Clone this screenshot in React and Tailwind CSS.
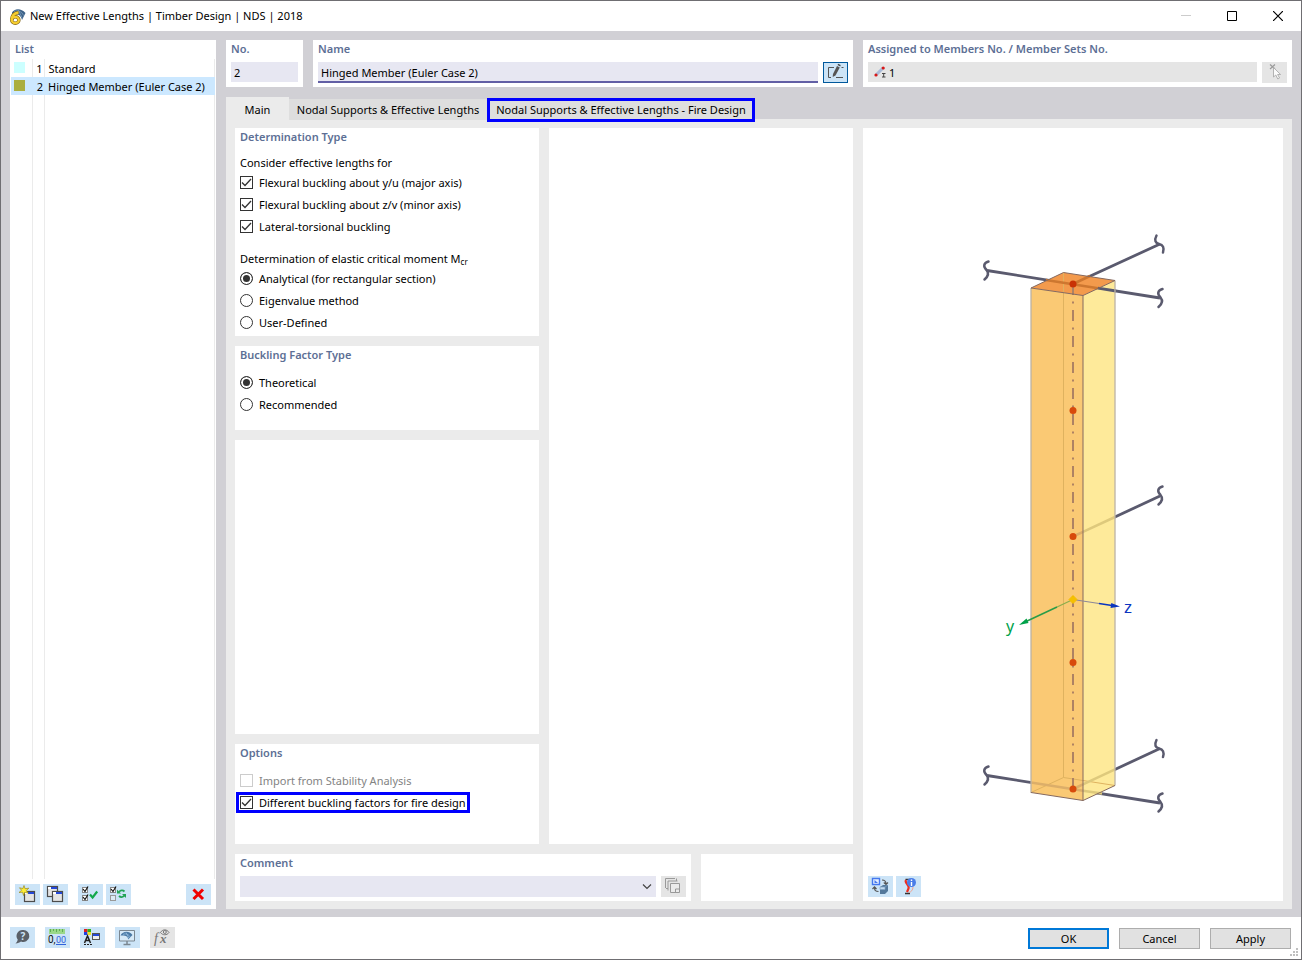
import { useState } from 'react';

const members = [
  { no: 1, name: 'Standard', color: 'bg-[#ccffff]' },
  { no: 2, name: 'Hinged Member (Euler Case 2)', color: 'bg-[#aaae40]' },
];

const tabs = [
  { label: 'Main', style: 'h-[23px] w-[63px] pt-0.5' },
  { label: 'Nodal Supports & Effective Lengths', style: 'mt-0.5 h-[21px] w-[198px]' },
  { label: 'Nodal Supports & Effective Lengths - Fire Design', style: 'mt-px h-6 w-[268px] border-3 border-[#0000ff]' },
];

/* ---------- icons, all drawn on the 25x21 button face ---------- */

const Icon = ({ children }) => (
  <svg width="25" height="21" viewBox="0 0 25 21" fill="none" aria-hidden="true">{children}</svg>
);

const MiniWindow = ({ x, y }) => (
  <g>
    <rect x={x + 0.5} y={y + 0.5} width="10" height="10" fill="#e4e4e4" stroke="#4c4c4c" strokeWidth="1.2" />
    <rect x={x + 1} y={y + 1} width="9" height="2" fill="#fff" />
    <rect x={x + 4} y={y + 1} width="6" height="2" fill="#2448d8" />
  </g>
);

const NewIcon = () => (
  <Icon>
    <MiniWindow x={9} y={7} />
    <path d="M9 1.5l1 3.200 3.800-.5-2.600 2.400 2 2.600-3.400-1L8.500 11.500l-.8-3.300-3.700.3 2.600-2.200L4.500 3.800l3.400.7z" fill="#ffee33" stroke="#9a8a20" strokeWidth=".7" />
  </Icon>
);

const CopyIcon = () => (
  <Icon>
    <MiniWindow x={4} y={2} />
    <MiniWindow x={9} y={7} />
  </Icon>
);

const TickBox = ({ y, ticked }) => (
  <g>
    <rect x="4.5" y={y + 0.5} width="5" height="5" fill={ticked ? '#fff' : '#dcebf5'} stroke={ticked ? '#888' : '#999'} />
    {ticked && <path d={`M5 ${y + 2}l2 2.500 3-5`} stroke="#111" strokeWidth="1.2" />}
  </g>
);

const CheckAllIcon = () => (
  <Icon>
    <TickBox y={3} ticked />
    <TickBox y={11} ticked />
    <path d="M12 10.5l2.600 3 4.600-6" stroke="#12a84a" strokeWidth="2.2" />
  </Icon>
);

const InvertIcon = () => (
  <Icon>
    <TickBox y={3} ticked />
    <TickBox y={11} />
    <path d="M13 8c1.500-2 4-2 5.500-.5M18.500 11.500c-1.500 2-4 2-5.500.5" stroke="#22a455" strokeWidth="1.8" />
    <path d="M11 5.500v4h4zM20 14v-4h-4z" fill="#22a455" />
  </Icon>
);

const DeleteIcon = () => (
  <Icon><path d="M7.500 5.500l9.500 9.500M17 5.500L7.500 15" stroke="#f00000" strokeWidth="3" /></Icon>
);

const HelpIcon = () => (
  <Icon>
    <path d="M13 3a6 6 0 1 1-2 11.500c-1.500 1-3 1.700-5.500 2 1.500-1.500 2-2.500 2.200-4A6 6 0 0 1 13 3z" fill="#5a6068" />
    <text x="10.5" y="13" fontSize="10" fontWeight="bold" fontFamily="Noto Sans, sans-serif" fill="#cce4f7">?</text>
  </Icon>
);

const UnitsIcon = () => (
  <Icon>
    <path d="M4 2h16v5H4z" fill="#9ad88a" />
    <path d="M5.500 2v3M8.500 2v2M11.500 2v3M14.500 2v2M17.500 2v3" stroke="#5fae55" />
    <text x="3" y="16" fontSize="10" fontFamily="Roboto, sans-serif" fill="#111">0,</text>
    <text x="11" y="16" fontSize="9" fontFamily="Roboto, sans-serif" fill="#2f62dc">00</text>
    <path d="M11 17.500h10" stroke="#2f62dc" />
  </Icon>
);

const DisplayIcon = () => (
  <Icon>
    <path d="M4 2h3.500v3H4z" fill="#e02020" />
    <path d="M7.500 2H11v3H7.500z" fill="#30b020" />
    <path d="M4 5h3.500v3H4z" fill="#2040e0" />
    <path d="M7.500 5H11v3H7.500z" fill="#f0e020" />
    <path d="M4.500 16l3-7 3 7M5.500 13.500h4" stroke="#222" strokeWidth="1.5" />
    <path d="M4 17.500h9" stroke="#222" strokeDasharray="2 1" />
    <rect x="12.5" y="6.5" width="7" height="6" fill="#eee" stroke="#555" />
    <path d="M13 8h6" stroke="#2448d8" strokeWidth="2" />
  </Icon>
);

const MonitorIcon = () => (
  <Icon>
    <path d="M4.500 3.500h15v10.500h-15z" stroke="#7b8791" fill="#d7eaf8" />
    <path d="M12 14v3M8.500 17.500h7" stroke="#7b8791" strokeWidth="1.5" />
    <path d="M5.500 8.500C8 4 14 3.500 17.500 8l-4.500 4.500c.5-3-2.500-4.500-7.500-4z" fill="#4a79a5" />
    <path d="M8 7.500c3-1.500 6 0 7 2.500M11 5.500l3 6" stroke="#9cc3e4" strokeWidth=".7" />
  </Icon>
);

const FormulaIcon = () => (
  <Icon>
    <text x="4" y="16" fontSize="14" fontStyle="italic" fontFamily="Liberation Serif, serif" fill="#777">f</text>
    <text x="10" y="16" fontSize="13" fontStyle="italic" fontWeight="bold" fontFamily="Liberation Serif, serif" fill="#777">x</text>
    <path d="M10.500 5.500c2-3.500 6.500-3.500 8.500 0-2 3-6.500 3-8.500 0z" stroke="#777" />
    <circle cx="14.800" cy="5" r="1.500" stroke="#777" />
  </Icon>
);

const EditIcon = () => (
  <svg width="23" height="19" viewBox="0 0 23 19" fill="none" aria-hidden="true">
    <path d="M10 4.500H4.500v10H7M12 14.500h7M17.500 4.500h2" stroke="#555" />
    <path d="M9 11L13 3l2.800 1.400-4.300 8.100L8.700 14z" fill="#555" />
    <path d="M13.500 2l.7-1.300 2.500 1.300-.5 1.400z" fill="#444" />
  </svg>
);

const PickIcon = () => (
  <Icon>
    <path d="M8 2.500l5 4.500M13 2.500L8 7" stroke="#999" strokeWidth="1.2" />
    <path d="M11.500 5.500v9.500l2.300-2 2 4 1.800-1-2-3.500h3z" fill="#fafafa" stroke="#aaa" strokeWidth=".9" />
  </Icon>
);

const StackIcon = () => (
  <Icon>
    <path d="M14 2.500H4.500V12M16.500 5H7v9.500M15.500 2.500V5M5 12.500h2" stroke="#999" />
    <path d="M9.500 7.500h9v9h-9zM14.500 16.500v-3.500h4" stroke="#999" fill="#ebebeb" />
  </Icon>
);

const SwitchViewIcon = () => (
  <Icon>
    <path d="M4.500 2.500h7v6h-7z" fill="#e6efff" stroke="#4478ee" strokeWidth="1.4" />
    <path d="M6.500 4v3h3.500z" fill="#4478ee" />
    <path d="M14 4c3 0 4 1 4 4M15.800 6.500l2.200 2 2-2M10.500 15.500c-3 0-4-1-4-4M4.500 13l2-2.200 2 2.200" stroke="#555" strokeWidth="1.2" />
    <path d="M12 11l3-2h5v6l-3 3h-5z" fill="#53789b" />
    <path d="M12 11h5v2.500h-5zM17 11l3-2" fill="#c3dbf0" stroke="#7fa3c4" strokeWidth=".7" />
  </Icon>
);

const InfoViewIcon = () => (
  <Icon>
    <path d="M9.500 3.500h5M9 17.500h5" stroke="#333" strokeWidth="1.5" />
    <path d="M10 4c-2 3 4 5 2.500 8.500L11 16" stroke="#ee2d20" strokeWidth="2.2" />
    <path d="M17 11c0 3-2 5-4 5.500" stroke="#f3a08c" />
    <circle cx="15.500" cy="6.500" r="4.500" fill="#4a7de8" />
    <path d="M15.500 6v4M15.500 3.500v1.400" stroke="#fff" strokeWidth="1.4" />
  </Icon>
);

const AppIcon = () => (
  <svg width="17" height="17" viewBox="0 0 17 17" fill="none" aria-hidden="true">
    <path d="M3 4.500C5 .5 12-.5 16.500 5l-3.500 7C12 7 8 5 3 6z" fill="#3d6288" />
    <path d="M5 3.500c4-1.500 8 0 9.500 4M9 1.500l4 8" stroke="#86a8c6" strokeWidth=".7" />
    <path d="M9.500 4.500C5.500 5 2.800 7.500 2.800 12" stroke="#806418" strokeWidth="3.6" />
    <ellipse cx="6.300" cy="12" rx="3.600" ry="3.200" stroke="#806418" strokeWidth="3.4" />
    <path d="M9.500 4.500C5.500 5 2.800 7.500 2.800 12" stroke="#f5cc2e" strokeWidth="2.4" />
    <ellipse cx="6.300" cy="12" rx="3.600" ry="3.200" stroke="#f5cc2e" strokeWidth="2.2" />
  </svg>
);

const MemberIcon = () => (
  <svg width="12" height="12" viewBox="0 0 12 12" fill="none" aria-hidden="true">
    <path d="M2 9l7-7" stroke="#a9bbd8" strokeWidth="3" />
    <circle cx="2" cy="9" r="1.600" fill="#d81818" />
    <circle cx="9.200" cy="2" r="1.600" fill="#d81818" />
    <path d="M8 7.500h3.500M8 11h3.500M9.700 7.500V11" stroke="#444" />
  </svg>
);

/* ---------- small building blocks ---------- */

const Panel = ({ title, className = '', children }) => (
  <section className={`flex flex-col bg-white px-[5px] ${className}`}>
    {title && <h2 className="h-[18px] shrink-0 font-semibold leading-[18px] text-[#5d6f95] whitespace-nowrap">{title}</h2>}
    {children}
  </section>
);

const IconButton = ({ label, disabled, className = '', children }) => (
  <button
    type="button"
    aria-label={label}
    disabled={disabled}
    className={`flex h-[21px] w-[25px] shrink-0 items-center justify-center ${disabled ? 'bg-[#e5e5e5]' : 'bg-[#cce4f7]'} ${className}`}
  >
    {children}
  </button>
);

const Checkbox = ({ label, defaultChecked, disabled, className = 'h-[22px]' }) => (
  <label className={`flex w-fit items-center gap-1.5 ${disabled ? 'text-[#838383]' : ''} ${className}`}>
    <span className="relative mb-px size-[13px] shrink-0">
      <input
        type="checkbox"
        defaultChecked={defaultChecked}
        disabled={disabled}
        className="peer block size-[13px] appearance-none border border-[#333] bg-white disabled:border-[#ccc]"
      />
      <svg viewBox="0 0 13 13" fill="none" className="pointer-events-none absolute inset-0 hidden peer-checked:block">
        <path d="M2 6.500l3 3 6-6.500" stroke="#333" strokeWidth="1.3" />
      </svg>
    </span>
    <span className="whitespace-nowrap">{label}</span>
  </label>
);

const Radio = ({ label, name, defaultChecked }) => (
  <label className="flex h-[22px] w-fit items-center gap-1.5">
    <input
      type="radio"
      name={name}
      defaultChecked={defaultChecked}
      className="mb-px size-[13px] shrink-0 appearance-none rounded-full border border-[#333] bg-white checked:bg-[#333] checked:shadow-[inset_0_0_0_2px_white]"
    />
    <span className="whitespace-nowrap">{label}</span>
  </label>
);

/* ---------- timber column preview ---------- */

// break symbol at the free end of a connected member
const Break = ({ x, y }) => (
  <path
    d={`M${x + 2.5} ${y - 9}c-5 1.500-5.500 5-2 8.500 2.500 3 1.500 6.500-2 9.500`}
    stroke="#5a5a6e" strokeWidth="2.500" strokeLinecap="round"
  />
);

const BreakTilted = ({ x, y }) => (
  <path
    d={`M${x - 3} ${y - 8.5}c-2.500 5-1 7.500 2.500 8.500 4 1 5.500 3.500 4 8.500`}
    stroke="#5a5a6e" strokeWidth="2.500" strokeLinecap="round"
  />
);

const ColumnDrawing = () => (
  <svg viewBox="863 128 420 748" fill="none" className="min-h-0 w-full flex-1" role="img" aria-label="Hinged member">
    {/* connected members */}
    <g stroke="#5a5a6e" strokeWidth="2.800">
      <path d="M987 270.500L1160 298M1073 284l87-40" />
      <path d="M1073 536.500l87-40.500" />
      <path d="M987 775.500L1160 803M1073 789l87-40.500" />
    </g>
    <Break x={986} y={270.5} />
    <BreakTilted x={1159.5} y={244} />
    <Break x={1160} y={298} />
    <Break x={1160} y={495.5} />
    <Break x={986} y={775.5} />
    <BreakTilted x={1159.5} y={748.5} />
    <Break x={1160} y={802.5} />

    {/* faces */}
    <path d="M1031 288l52 7.500v505l-52-8z" fill="#fac974" />
    <path d="M1083 295.500l32-15v505l-32 15z" fill="#feea9a" />
    <path d="M1031 288l32.500-15.500 51.500 8-32 15z" fill="#f39a4c" />

    {/* what shows through the timber */}
    <path d="M1063.500 272.500v505M1031 792.500l32.500-15 51.500 8" stroke="#dfb25f" />
    <path d="M1046 280l52 8.200M1073 284l17-8" stroke="#cd7730" strokeWidth="2.500" />
    <path d="M1098 288.200l18 2.800" stroke="#5a5a6e" strokeWidth="2.800" />
    <path d="M1031 782.500l52 8.300M1073 536.500l10-4.600M1073 789l10-4.700" stroke="#dcae69" strokeWidth="2.500" />
    <path d="M1083 531.900l32-14.900M1083 784.300l32-14.900M1083 790.800l19 2.700" stroke="#dec97c" strokeWidth="2.500" />
    <path d="M1073 284v505" stroke="#ae8263" strokeWidth="2" strokeDasharray="11 6.500 2 6.500" />

    {/* edges */}
    <path d="M1031 288v505M1115 280.500v505" stroke="#bcb3a5" strokeWidth="1.300" />
    <path d="M1031 288l32.500-15.500 51.500 8-32 15zM1083 295.500v505M1031 792.500l52 8 32-15" stroke="#85695f" />

    {/* local axes */}
    <path d="M1073 599.500l-16 7.500" stroke="#8cae4c" strokeWidth="1.300" />
    <path d="M1057 607l-32 15" stroke="#2a9c48" strokeWidth="1.500" />
    <path d="M1019 625l7.500-6.500 2 4.500z" fill="#00a24a" />
    <path d="M1073 599.500l26 4" stroke="#8c8798" strokeWidth="1.200" />
    <path d="M1099 603.500l13 2" stroke="#0a35c0" strokeWidth="1.500" />
    <path d="M1120 606.500l-9.500 1.500.8-5z" fill="#0a35c0" />
    <text x="1006" y="632" fontSize="16" fontFamily="Noto Sans, sans-serif" fill="#00a24a">y</text>
    <text x="1124" y="613" fontSize="17" fontFamily="Noto Sans, sans-serif" fill="#0a35c0">z</text>

    {/* nodes */}
    <circle cx="1073" cy="284" r="3.500" fill="#c93205" />
    {[410.5, 536.5, 662.5, 789].map(y => (
      <circle key={y} cx="1073" cy={y} r="3.500" fill="#d84a0b" />
    ))}
    <path d="M1073 595.500l4 4-4 4-4-4z" fill="#f5c000" stroke="#f5c000" />
  </svg>
);

const MemberList = () => (
  <aside className="flex w-[206px] shrink-0 flex-col bg-white pb-1">
    <h2 className="h-[19px] pl-[5px] font-semibold leading-[18px] text-[#5d6f95]">List</h2>
    <div className="grid flex-1 px-px">
      <table className="h-full w-full table-fixed border-collapse">
        <colgroup>
          <col className="w-[21px]" />
          <col className="w-3" />
          <col />
        </colgroup>
        <tbody>
          {members.map(m => (
            <tr key={m.no} className={m.no === 2 ? 'h-[18px] bg-[#cce8ff]' : 'h-[18px] divide-x divide-[#ebebeb] border-r border-[#ebebeb]'}>
              <td className="p-0 pb-px pl-[3px]"><div className={`size-[11px] ${m.color}`} /></td>
              <td className="p-0 pt-px pr-px text-right leading-[17px]">{m.no}</td>
              <td className="p-0 pt-px pl-1 leading-[17px] whitespace-nowrap">{m.name}</td>
            </tr>
          ))}
          <tr className="divide-x divide-[#ebebeb] border-r border-[#ebebeb]">
            <td /><td /><td />
          </tr>
        </tbody>
      </table>
    </div>
    <div className="mt-[5px] flex gap-[3px] px-[5px]">
      <IconButton label="New"><NewIcon /></IconButton>
      <IconButton label="Copy"><CopyIcon /></IconButton>
      <IconButton label="Select all" className="ml-[7px]"><CheckAllIcon /></IconButton>
      <IconButton label="Invert selection"><InvertIcon /></IconButton>
      <IconButton label="Delete" className="ml-auto"><DeleteIcon /></IconButton>
    </div>
  </aside>
);

const App = () => {
  const [activeTab, setActiveTab] = useState('Main');

  return (
    <div className="flex min-h-screen flex-col border border-[#6f6e72] bg-white font-['Noto_Sans',sans-serif] text-[11px] leading-4 text-black">

      {/* Title bar */}
      <header className="flex h-[30px] shrink-0 items-center pl-2">
        <AppIcon />
        <h1 className="ml-1 flex-1 whitespace-nowrap">New Effective Lengths | Timber Design | NDS | 2018</h1>
        <button type="button" aria-label="Minimize" disabled className="flex h-full w-[46px] items-center justify-center">
          <svg width="10" height="10" viewBox="0 0 10 10"><path d="M0 4.500h10" stroke="#ccc" /></svg>
        </button>
        <button type="button" aria-label="Maximize" className="flex h-full w-[46px] items-center justify-center">
          <svg width="10" height="10" viewBox="0 0 10 10"><path d="M.5 .5h9v9h-9z" fill="none" stroke="#000" /></svg>
        </button>
        <button type="button" aria-label="Close" className="flex h-full w-[46px] items-center justify-center">
          <svg width="10" height="10" viewBox="0 0 10 10"><path d="M0 0l10 10M10 0L0 10" stroke="#000" strokeWidth="1.200" /></svg>
        </button>
      </header>

      <main className="flex flex-1 gap-2.5 bg-[#d1d0d5] px-[9px] pt-[9px] pb-2">
        <MemberList />

        <div className="flex min-w-0 flex-1 flex-col">
          {/* Number, name and assignment */}
          <div className="flex gap-2.5">
            <Panel title={<label htmlFor="no">No.</label>} className="w-[77px] shrink-0 pb-1">
              <input id="no" defaultValue="2" className="mt-1 h-5 w-full bg-[#e7e7f2] pl-[3px] pt-px" />
            </Panel>
            <Panel title={<label htmlFor="name">Name</label>} className="min-w-0 flex-1 pb-1">
              <div className="mt-1 flex gap-[5px]">
                <input
                  id="name"
                  defaultValue="Hinged Member (Euler Case 2)"
                  className="h-[21px] min-w-0 flex-1 border-b-2 border-[#625fa5] bg-[#e7e7f2] pl-[3px] pt-px"
                />
                <IconButton label="Edit name" className="border border-[#00589c]"><EditIcon /></IconButton>
              </div>
            </Panel>
            <Panel title={<label htmlFor="assigned">Assigned to Members No. / Member Sets No.</label>} className="w-[429px] shrink-0 pb-1">
              <div className="mt-1 flex gap-[5px]">
                <div className="flex h-5 min-w-0 flex-1 items-center gap-[3px] bg-[#e5e5e5] pl-1.5">
                  <MemberIcon />
                  <input id="assigned" readOnly defaultValue="1" className="h-5 min-w-0 flex-1 bg-transparent pt-px" />
                </div>
                <IconButton label="Select members" disabled><PickIcon /></IconButton>
              </div>
            </Panel>
          </div>

          {/* Tabs */}
          <div role="tablist" className="relative z-10 mt-2.5 flex h-[22px] items-start">
            {tabs.map(tab => (
              <button
                key={tab.label}
                type="button"
                role="tab"
                aria-selected={activeTab === tab.label}
                onClick={() => setActiveTab(tab.label)}
                className={`flex shrink-0 items-center justify-center whitespace-nowrap ${tab.style} ${activeTab === tab.label ? 'bg-[#ebebeb]' : 'bg-[#dedede]'}`}
              >
                {tab.label}
              </button>
            ))}
          </div>

          <div className="flex flex-1 gap-2.5 bg-[#ebebeb] px-[9px] pt-[9px] pb-2">
            <div className="flex min-w-0 flex-1 flex-col gap-2.5">
              <div className="grid flex-1 grid-cols-2 gap-2.5">
                <div className="flex flex-col gap-2.5">
                  <Panel title="Determination Type" className="pb-0.5">
                    <p className="mt-2 leading-[18px]">Consider effective lengths for</p>
                    <Checkbox label="Flexural buckling about y/u (major axis)" defaultChecked />
                    <Checkbox label="Flexural buckling about z/v (minor axis)" defaultChecked />
                    <Checkbox label="Lateral-torsional buckling" defaultChecked />
                    <p className="mt-3 h-[18px] leading-[18px]">
                      Determination of elastic critical moment M<sub className="text-[8px]">cr</sub>
                    </p>
                    <Radio name="moment" label="Analytical (for rectangular section)" defaultChecked />
                    <Radio name="moment" label="Eigenvalue method" />
                    <Radio name="moment" label="User-Defined" />
                  </Panel>
                  <Panel title="Buckling Factor Type" className="pb-3.5">
                    <div className="mt-2">
                      <Radio name="factor" label="Theoretical" defaultChecked />
                      <Radio name="factor" label="Recommended" />
                    </div>
                  </Panel>
                  <Panel className="flex-1" />
                  <Panel title="Options" className="pb-[31px]">
                    <div className="mt-2">
                      <Checkbox label="Import from Stability Analysis" disabled />
                      <Checkbox
                        label="Different buckling factors for fire design"
                        defaultChecked
                        className="-ml-1 h-[21px] border-3 border-[#0000ff] px-px"
                      />
                    </div>
                  </Panel>
                </div>
                <Panel />
              </div>

              <div className="flex gap-2.5">
                <Panel title={<label htmlFor="comment">Comment</label>} className="min-w-0 flex-1 pb-1">
                  <div className="mt-1 flex gap-[5px]">
                    <div className="relative flex-1">
                      <select id="comment" className="block h-[21px] w-full appearance-none bg-[#e7e7f2] px-1">
                        <option></option>
                      </select>
                      <svg width="10" height="6" viewBox="0 0 10 6" fill="none" className="pointer-events-none absolute top-2 right-1">
                        <path d="M1 .5l4 4 4-4" stroke="#444" strokeWidth="1.200" />
                      </svg>
                    </div>
                    <IconButton label="Comment templates" disabled><StackIcon /></IconButton>
                  </div>
                </Panel>
                <Panel className="w-[152px] shrink-0" />
              </div>
            </div>

            {/* Preview */}
            <Panel className="w-[420px] shrink-0 pb-1">
              <div className="-mx-[5px] flex min-h-0 flex-1 flex-col">
                <ColumnDrawing />
              </div>
              <div className="flex gap-[3px]">
                <IconButton label="Switch view"><SwitchViewIcon /></IconButton>
                <IconButton label="Show information"><InfoViewIcon /></IconButton>
              </div>
            </Panel>
          </div>
        </div>
      </main>

      {/* Bottom bar */}
      <footer className="relative flex h-[42px] shrink-0 items-start gap-2.5 px-[9px] pt-2.5">
        <IconButton label="Help"><HelpIcon /></IconButton>
        <IconButton label="Units and decimal places"><UnitsIcon /></IconButton>
        <IconButton label="Display properties"><DisplayIcon /></IconButton>
        <IconButton label="View settings"><MonitorIcon /></IconButton>
        <IconButton label="Formula" disabled><FormulaIcon /></IconButton>
        <div className="mt-px mr-px ml-auto flex gap-2.5">
          <button type="button" className="h-[21px] w-[81px] border-2 border-[#0078d7] bg-[#e1e1e1]">OK</button>
          <button type="button" className="h-[21px] w-[81px] border border-[#adadad] bg-[#e1e1e1]">Cancel</button>
          <button type="button" className="h-[21px] w-[81px] border border-[#adadad] bg-[#e1e1e1]">Apply</button>
        </div>
        <svg width="9" height="9" viewBox="0 0 9 9" className="absolute right-0.5 bottom-0.5" aria-hidden="true">
          <path d="M6 0h2v2H6zM3 3h2v2H3zM6 3h2v2H6zM0 6h2v2H0zM3 6h2v2H3zM6 6h2v2H6z" fill="#bfbfbf" />
        </svg>
      </footer>
    </div>
  );
};

export default App;
